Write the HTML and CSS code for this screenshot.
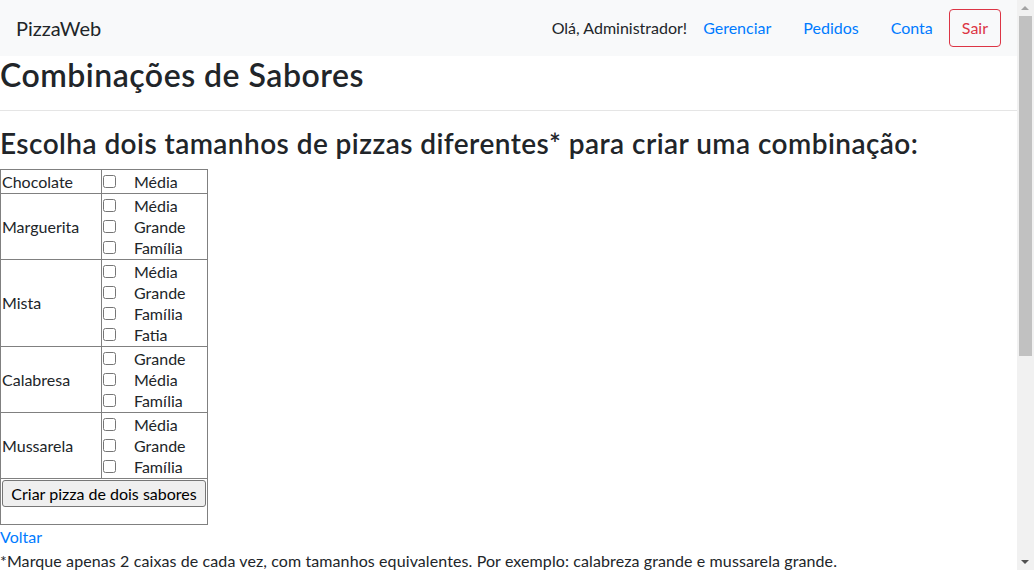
FILE: index.html
```html
<!DOCTYPE html>
<html lang="pt-BR">
<head>
<meta charset="utf-8">
<title>PizzaWeb</title>
<link rel="stylesheet" href="styles.css">
</head>
<body>
<div class="page">
  <nav class="navbar">
    <a class="brand" href="#">PizzaWeb</a>
    <div class="nav-right">
      <span class="greet">Olá, Administrador!</span>
      <a class="nav-link" href="#">Gerenciar</a>
      <a class="nav-link" href="#">Pedidos</a>
      <a class="nav-link" href="#">Conta</a>
      <button class="btn-sair" type="button">Sair</button>
    </div>
  </nav>

  <h1 class="title">Combinações de Sabores</h1>
  <hr class="rule">
  <h3 class="subtitle">Escolha dois tamanhos de pizzas diferentes* para criar uma combinação:</h3>

  <table class="sabores">
    <tr>
      <td class="nome">Chocolate</td>
      <td class="opcoes">
        <label class="opt"><input type="checkbox"><span>Média</span></label>
      </td>
    </tr>
    <tr>
      <td class="nome">Marguerita</td>
      <td class="opcoes">
        <label class="opt"><input type="checkbox"><span>Média</span></label>
        <label class="opt"><input type="checkbox"><span>Grande</span></label>
        <label class="opt"><input type="checkbox"><span>Família</span></label>
      </td>
    </tr>
    <tr>
      <td class="nome">Mista</td>
      <td class="opcoes">
        <label class="opt"><input type="checkbox"><span>Média</span></label>
        <label class="opt"><input type="checkbox"><span>Grande</span></label>
        <label class="opt"><input type="checkbox"><span>Família</span></label>
        <label class="opt"><input type="checkbox"><span>Fatia</span></label>
      </td>
    </tr>
    <tr>
      <td class="nome">Calabresa</td>
      <td class="opcoes">
        <label class="opt"><input type="checkbox"><span>Grande</span></label>
        <label class="opt"><input type="checkbox"><span>Média</span></label>
        <label class="opt"><input type="checkbox"><span>Família</span></label>
      </td>
    </tr>
    <tr>
      <td class="nome">Mussarela</td>
      <td class="opcoes">
        <label class="opt"><input type="checkbox"><span>Média</span></label>
        <label class="opt"><input type="checkbox"><span>Grande</span></label>
        <label class="opt"><input type="checkbox"><span>Família</span></label>
      </td>
    </tr>
    <tr>
      <td class="acao" colspan="2"><button class="btn-criar" type="button">Criar pizza de dois sabores</button></td>
    </tr>
  </table>

  <a class="voltar" href="#">Voltar</a>
  <p class="nota">*Marque apenas 2 caixas de cada vez, com tamanhos equivalentes. Por exemplo: calabreza grande e mussarela grande.</p>
</div>

<div class="scrollbar" aria-hidden="true">
  <div class="sb-up"></div>
  <div class="sb-thumb"></div>
  <div class="sb-down"></div>
</div>
</body>
</html>
```

FILE: styles.css
```css
html, body {
  margin: 0;
  padding: 0;
  overflow: hidden;
  background: #fff;
}

body {
  font-family: "Lato", "Liberation Sans", sans-serif;
  font-size: 16px;
  line-height: 1.5;
  color: #212529;
}

.page {
  width: 1017px;
}

a {
  color: #007bff;
  text-decoration: none;
}

/* Navbar */
.navbar {
  height: 56px;
  box-sizing: border-box;
  background: #f8f9fa;
  display: flex;
  align-items: center;
  justify-content: space-between;
  padding: 0 16px;
}

.brand {
  font-size: 20px;
  line-height: 30px;
  color: #212529;
}

.nav-right {
  display: flex;
  align-items: center;
}

.greet {
  color: #212529;
}

.nav-link {
  padding: 8px 16px;
  color: #007bff;
}

.btn-sair {
  font-family: inherit;
  font-size: 16px;
  line-height: 24px;
  padding: 6px 12px;
  color: #dc3545;
  background: transparent;
  border: 1px solid #dc3545;
  border-radius: 4px;
}

/* Headings */
.title {
  margin: 0;
  font-size: 32px;
  font-weight: 600;
  line-height: 1.2;
  letter-spacing: 0.5px;
}

.rule {
  margin: 16px 0;
  border: 0;
  border-top: 1px solid rgba(0, 0, 0, 0.1);
  height: 0;
}

.subtitle {
  margin: 0 0 8px;
  font-size: 28px;
  font-weight: 600;
  line-height: 1.2;
  letter-spacing: 0.44px;
}

/* Table */
.sabores {
  border-collapse: collapse;
  width: 208px;
}

.sabores td {
  border: 1px solid #808080;
  padding: 1px;
  line-height: 21px;
}

.nome {
  width: 98px;
  vertical-align: middle;
}

.opt {
  display: flex;
  align-items: center;
  height: 21px;
}

.opt input {
  margin: 0 18px 0 0;
  width: 13px;
  height: 13px;
}

.acao {
  padding: 1px 1px 17px !important;
}

.btn-criar {
  display: block;
  width: 204px;
  height: 27px;
  margin: 0;
  font-family: inherit;
  font-size: 16px;
  color: #000;
  background: #efefef;
  border: 1px solid #767676;
  border-radius: 3px;
  padding: 1px 6px;
}

.voltar {
  display: block;
  line-height: 24px;
  width: max-content;
}

.nota {
  margin: 0;
  line-height: 24px;
  letter-spacing: 0.1px;
}

/* Fake scrollbar (overlays the window edge) */
.scrollbar {
  position: fixed;
  top: 0;
  right: 0;
  width: 17px;
  height: 570px;
  background: #f1f1f1;
}

.sb-up,
.sb-down {
  position: absolute;
  left: 4px;
  width: 0;
  height: 0;
  border-left: 4px solid transparent;
  border-right: 4px solid transparent;
}

.sb-up {
  top: 6px;
  border-bottom: 4px solid #a3a3a3;
}

.sb-down {
  bottom: 6px;
  border-top: 4px solid #505050;
}

.sb-thumb {
  position: absolute;
  top: 16px;
  left: 2px;
  width: 13px;
  height: 340px;
  background: #c1c1c1;
}
```
